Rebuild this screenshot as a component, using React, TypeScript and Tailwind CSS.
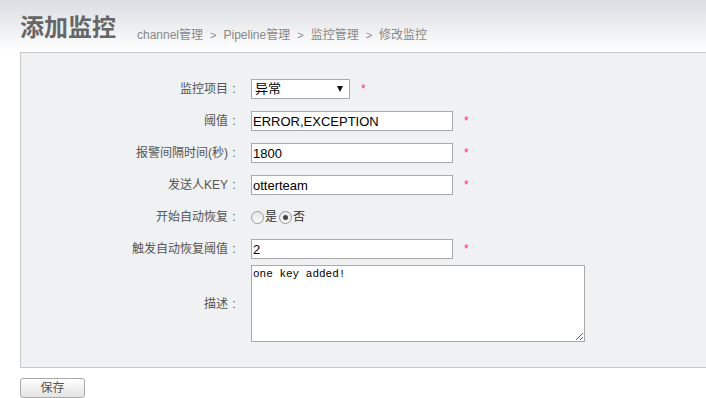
const FONT = '"Liberation Sans", "Noto Sans CJK SC", sans-serif';

const CRUMBS = ['channel管理', 'Pipeline管理', '监控管理', '修改监控'];

function Star() {
  return <span className="ml-[11px] text-[12px] leading-none text-[#ff3366]">*</span>;
}

function Row({ label, children, className = 'h-[20px]' }: { label: string; children: React.ReactNode; className?: string }) {
  return (
    <div className={`flex items-center ${className}`}>
      <label className="flex w-[219px] shrink-0 justify-end text-[12px] text-[#555]">
        {label}
        <span className="w-[12px] text-center">:</span>
      </label>
      <div className="ml-[11px] flex items-center">{children}</div>
    </div>
  );
}

function TextInput({ value }: { value: string }) {
  return (
    <input
      readOnly
      value={value}
      className="h-[20px] w-[202px] border border-[#a9a9a9] bg-white px-[1px] text-[13px] text-black outline-none"
    />
  );
}

function Radio({ checked }: { checked?: boolean }) {
  return (
    <span className="flex h-[13px] w-[13px] items-center justify-center rounded-full border border-[#9a9a9a] bg-gradient-to-b from-[#e6e6e6] to-[#fafafa]">
      {checked && <span className="h-[5px] w-[5px] rounded-full bg-[#444]" />}
    </span>
  );
}

export default function App() {
  return (
    <div className="min-h-[398px] w-[706px] overflow-hidden bg-white" style={{ fontFamily: FONT }}>
      <div className="flex h-[52px] items-start bg-gradient-to-b from-[#dadde1] to-white pl-[20px] pt-[12px]">
        <h1 className="text-[24px] font-bold leading-[32px] text-[#666]">添加监控</h1>
        <nav className="ml-[21px] mt-[14px] flex items-baseline text-[12px] leading-[18px] text-[#888]">
          {CRUMBS.map((c, i) => (
            <span key={c} className="flex items-baseline">
              {i > 0 && <span className="mx-[7px] text-[11px]">&gt;</span>}
              {c}
            </span>
          ))}
        </nav>
      </div>

      <div className="ml-[20px] flex flex-col gap-[12px] border border-r-0 border-[#c8c8c8] bg-[#f0f1f3] pb-[25px] pt-[26px]">
        <Row label="监控项目">
          <div className="flex h-[20px] w-[99px] items-center justify-between border border-[#a9a9a9] bg-white pl-[3px] pr-[6px] text-[13px] text-black">
            <span>异常</span>
            <svg width="6" height="6" viewBox="0 0 6 6">
              <path d="M0 0h6L3 6z" fill="#111" />
            </svg>
          </div>
          <Star />
        </Row>
        <Row label="阈值">
          <TextInput value="ERROR,EXCEPTION" />
          <Star />
        </Row>
        <Row label="报警间隔时间(秒)">
          <TextInput value="1800" />
          <Star />
        </Row>
        <Row label="发送人KEY">
          <TextInput value="otterteam" />
          <Star />
        </Row>
        <Row label="开始自动恢复">
          <div className="flex items-center text-[12px] text-[#333]">
            <Radio />
            <span className="ml-[1px]">是</span>
            <span className="ml-[2px]" />
            <Radio checked />
            <span className="ml-[1px]">否</span>
          </div>
        </Row>
        <Row label="触发自动恢复阈值">
          <TextInput value="2" />
          <Star />
        </Row>
        <Row label="描述" className="-mt-[6px]">
          <textarea
            readOnly
            defaultValue="one key added!"
            className="block h-[77px] w-[334px] border border-[#a9a9a9] bg-white px-[1px] py-[1px] text-[11px] leading-[14px] text-black outline-none"
            style={{ fontFamily: '"Liberation Mono", monospace' }}
          />
        </Row>
      </div>

      <div className="ml-[20px] mt-[10px] flex">
        <button className="h-[20px] w-[65px] rounded-[3px] border border-[#aaa] bg-gradient-to-b from-white to-[#e4e4e4] text-[12px] leading-none text-[#555]">
          保存
        </button>
      </div>
    </div>
  );
}
